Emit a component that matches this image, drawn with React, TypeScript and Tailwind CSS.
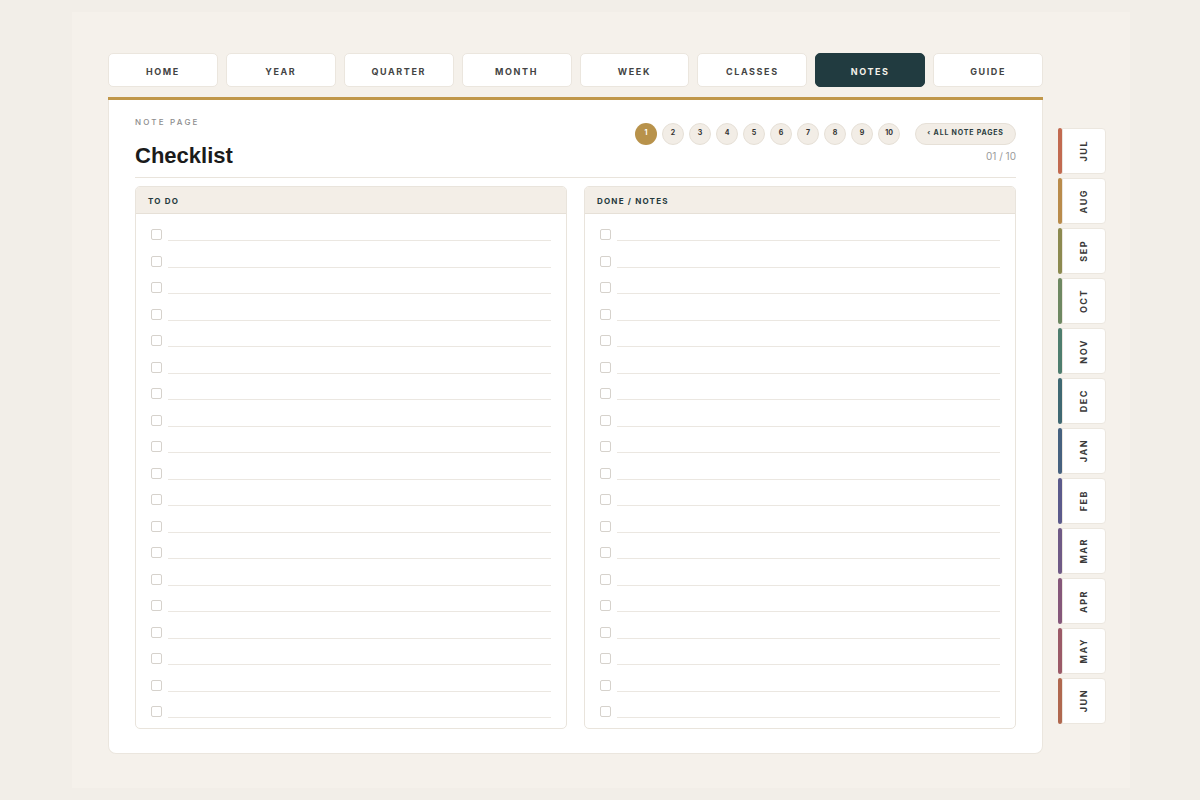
import React from "react";

const nav = ["HOME", "YEAR", "QUARTER", "MONTH", "WEEK", "CLASSES", "NOTES", "GUIDE"];
const months: [string, string][] = [
  ["JUL", "#c26a50"],
  ["AUG", "#b98b4b"],
  ["SEP", "#8c8a50"],
  ["OCT", "#6e8862"],
  ["NOV", "#4e7d6e"],
  ["DEC", "#3f6872"],
  ["JAN", "#46617f"],
  ["FEB", "#5b5a8b"],
  ["MAR", "#6f5a86"],
  ["APR", "#85577a"],
  ["MAY", "#9b5a68"],
  ["JUN", "#b0684f"],
];
const rows = Array.from({ length: 19 }, (_, i) => i);

function Column({ title }: { title: string }) {
  return (
    <div className="flex-1 flex flex-col rounded-[5px] border border-[#e9e4dc] overflow-hidden bg-white">
      <div className="h-[27px] flex items-center pt-[3px] px-3 bg-[#f3eee7] border-b border-[#e6e0d7] text-[8px] font-bold tracking-[1.2px] text-[#253a3d]">
        {title}
      </div>
      <div className="flex flex-col px-[15px] pt-[1px] pb-[10px]">
        {rows.map((r) => (
          <div key={r} className="h-[26.5px] flex items-end gap-[6px]">
            <div className="w-[11px] h-[11px] rounded-[2px] border border-[#d6d2cc] bg-white mb-[1px] shrink-0" />
            <div className="flex-1 border-b border-[#ebe7e1]" />
          </div>
        ))}
      </div>
    </div>
  );
}

export default function App() {
  return (
    <div
      className="w-[1200px] h-[800px] bg-[#f2eee8] pt-[12px] pl-[72px]"
      style={{ fontFamily: "Inter, 'Liberation Sans', sans-serif" }}
    >
      <div className="w-[1058px] h-[776px] bg-[#f5f1eb] flex pl-[36px] pt-[41px] gap-[15px]">
        <div className="w-[935px] flex flex-col">
          <div className="flex gap-[8px] h-[34px]">
            {nav.map((n) => (
              <div
                key={n}
                className={
                  n === "NOTES"
                    ? "flex-1 rounded-[5px] bg-[#213b40] border border-[#213b40] flex items-center justify-center pt-[3px] text-[9px] font-bold tracking-[1.6px] text-[#f4f1ea]"
                    : "flex-1 rounded-[5px] bg-white border border-[#ebe6de] flex items-center justify-center pt-[3px] text-[9px] font-bold tracking-[1.6px] text-[#444]"
                }
              >
                {n}
              </div>
            ))}
          </div>
          <div className="mt-[10px] h-[657px] bg-white rounded-b-[8px] border-x border-b border-[#ebe6de] flex flex-col">
            <div className="h-[4px] bg-[#c0974a] -mx-px" />
            <div className="px-[26px] pt-[17px] flex flex-col flex-1 pb-[24px]">
              <div className="flex justify-between items-start h-[61px] border-b border-[#e9e4dc]">
                <div className="flex flex-col">
                  <div className="text-[8px] tracking-[2.2px] text-[#8d8d8d] font-medium leading-[10px]">NOTE PAGE</div>
                  <div
                    className="text-[22px] font-bold text-[#1b1b1b] mt-[16px] leading-[26px]"
                    style={{ fontFamily: "'Liberation Sans', Arial, sans-serif" }}
                  >
                    Checklist
                  </div>
                </div>
                <div className="flex flex-col items-end pt-[6px]">
                  <div className="flex items-center">
                    <div className="flex gap-[5px]">
                      {Array.from({ length: 10 }, (_, i) => i + 1).map((p) => (
                        <div
                          key={p}
                          className={
                            p === 1
                              ? "w-[22px] h-[22px] rounded-full bg-[#b8924b] flex items-center justify-center text-[7px] font-bold text-white"
                              : "w-[22px] h-[22px] rounded-full bg-[#f2ede6] border border-[#e6e0d7] flex items-center justify-center text-[7px] font-bold text-[#333]"
                          }
                        >
                          {p}
                        </div>
                      ))}
                    </div>
                    <div className="ml-[15px] w-[101px] h-[22px] rounded-full bg-[#f2ede6] border border-[#e6e0d7] flex items-center justify-center text-[7px] font-bold tracking-[0.8px] text-[#2a3d40]">
                      ‹ ALL NOTE PAGES
                    </div>
                  </div>
                  <div className="mt-[5px] text-[10px] text-[#9a9a9a] leading-[12px]">01 / 10</div>
                </div>
              </div>
              <div className="flex gap-[17px] mt-[8px] flex-1">
                <Column title="TO DO" />
                <Column title="DONE / NOTES" />
              </div>
            </div>
          </div>
        </div>
        <div className="flex flex-col gap-[4px] pt-[75px]">
          {months.map(([m, c]) => (
            <div key={m} className="w-[48px] h-[46px] flex">
              <div className="w-[4px] rounded-full" style={{ backgroundColor: c }} />
              <div className="flex-1 bg-white border border-[#ece7df] rounded-r-[4px] flex items-center justify-center">
                <span
                  className="text-[9px] font-bold tracking-[1.5px] text-[#3a3a3a] rotate-180"
                  style={{ writingMode: "vertical-rl" }}
                >
                  {m}
                </span>
              </div>
            </div>
          ))}
        </div>
      </div>
    </div>
  );
}
